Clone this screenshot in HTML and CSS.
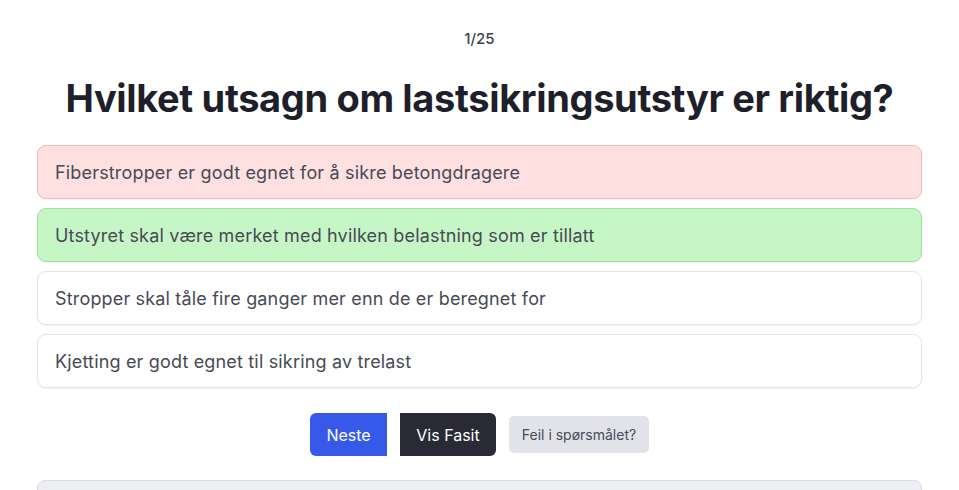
FILE: index.html
```html
<!DOCTYPE html>
<html lang="no">
  <head>
    <meta charset="UTF-8" />
    <meta name="viewport" content="width=device-width, initial-scale=1.0" />
    <title>Quiz</title>
    <link rel="stylesheet" href="styles.css">
  </head>
  <body>
    <main class="quiz">
      <p class="counter">1/25</p>
      <h1 class="question">Hvilket utsagn om lastsikringsutstyr er riktig?</h1>

      <div class="options">
        <button class="option wrong">Fiberstropper er godt egnet for å sikre betongdragere</button>
        <button class="option right">Utstyret skal være merket med hvilken belastning som er tillatt</button>
        <button class="option">Stropper skal tåle fire ganger mer enn de er beregnet for</button>
        <button class="option">Kjetting er godt egnet til sikring av trelast</button>
      </div>

      <div class="actions">
        <button class="btn next">Neste</button>
        <button class="btn answer">Vis Fasit</button>
        <button class="btn report">Feil i spørsmålet?</button>
      </div>

      <div class="explanation"></div>
    </main>
  </body>
</html>
```

FILE: styles.css
```css
* {
  box-sizing: border-box;
}

body {
  margin: 0;
  background: #fff;
  font-family: Inter, "Noto Sans", sans-serif;
  color: #1e1f2b;
}

.quiz {
  padding: 29px 37px 0;
}

.counter {
  margin: 0;
  text-align: center;
  font-size: 15px;
  line-height: 20px;
  font-weight: 500;
  color: #3f4150;
}

.question {
  margin: 25px 0 23px;
  text-align: center;
  font-size: 38px;
  line-height: 48px;
  font-weight: 700;
  letter-spacing: -0.35px;
  color: #1e1f2b;
}

.options {
  display: flex;
  flex-direction: column;
  gap: 9px;
}

.option {
  height: 54px;
  padding: 0 17px;
  text-align: left;
  font-family: inherit;
  font-size: 18px;
  letter-spacing: 0.17px;
  color: #474a55;
  background: #fff;
  border: 1px solid #e4e5ea;
  border-radius: 9px;
  box-shadow: 0 1px 2px rgba(0, 0, 0, 0.06);
}

.option.wrong {
  background: #fee0e0;
  border-color: #f8b9b9;
}

.option.right {
  background: #c7f6c6;
  border-color: #9fe09d;
}

.actions {
  display: flex;
  justify-content: center;
  align-items: center;
  gap: 13px;
  margin: 25px 0 24px;
}

.btn {
  font-family: inherit;
  border: none;
  height: 43px;
  font-size: 16px;
  color: #fff;
}

.next {
  width: 77px;
  background: #3659e9;
  border-radius: 6px 0 0 6px;
}

.answer {
  width: 96px;
  background: #292a36;
  border-radius: 0 6px 6px 0;
}

.report {
  width: 140px;
  height: 37px;
  font-size: 14px;
  color: #494b57;
  background: #e2e3e8;
  border-radius: 5px;
}

.explanation {
  height: 40px;
  background: #eeeff2;
  border: 1px solid #dcdde3;
  border-radius: 8px 8px 0 0;
}
```
